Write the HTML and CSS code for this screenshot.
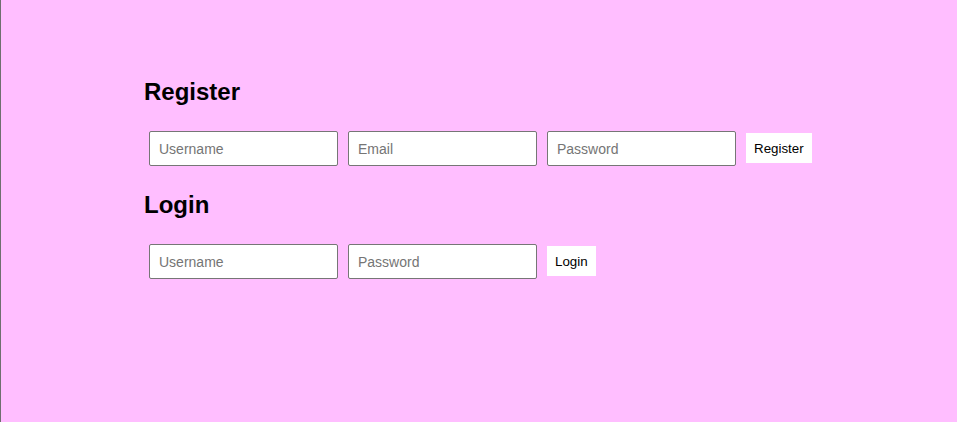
FILE: index.html
```html
<!DOCTYPE html>
<html>
<head>
<meta charset="utf-8">
<link rel="stylesheet" href="styles.css">
</head>
<body>
<main class="page">
  <h2 class="title">Register</h2>
  <form class="row">
    <input class="field" type="text" placeholder="Username">
    <input class="field" type="email" placeholder="Email">
    <input class="field" type="password" placeholder="Password">
    <button class="btn" type="button">Register</button>
  </form>
  <h2 class="title title-login">Login</h2>
  <form class="row">
    <input class="field" type="text" placeholder="Username">
    <input class="field" type="password" placeholder="Password">
    <button class="btn" type="button">Login</button>
  </form>
</main>
</body>
</html>
```
FILE: styles.css
```css
html, body {
  margin: 0;
  height: 100%;
}
body {
  background: #ffbeff;
  border-left: 1px solid #6f6f6f;
  box-sizing: border-box;
  font-family: "Liberation Sans", Arial, sans-serif;
}
.page {
  padding: 78px 0 0 143px;
}
.title {
  margin: 0;
  font-size: 24px;
  line-height: 28px;
  font-weight: bold;
  color: #000;
}
.title-login {
  margin-top: 25px;
}
.row {
  display: flex;
  align-items: flex-start;
  gap: 10px;
  margin: 25px 0 0 5px;
}
.field {
  box-sizing: border-box;
  width: 189px;
  height: 35px;
  margin: 0;
  padding: 0 9px;
  border: 1px solid #767676;
  border-radius: 2px;
  background: #fff;
  font-family: "Liberation Sans", Arial, sans-serif;
  font-size: 14px;
  color: #000;
}
.field::placeholder {
  color: #757575;
}
.btn {
  height: 30px;
  margin: 2px 0 0;
  padding: 0 8px;
  border: none;
  background: #fff;
  font-family: "Liberation Sans", Arial, sans-serif;
  font-size: 13.33px;
  color: #000;
}
```
